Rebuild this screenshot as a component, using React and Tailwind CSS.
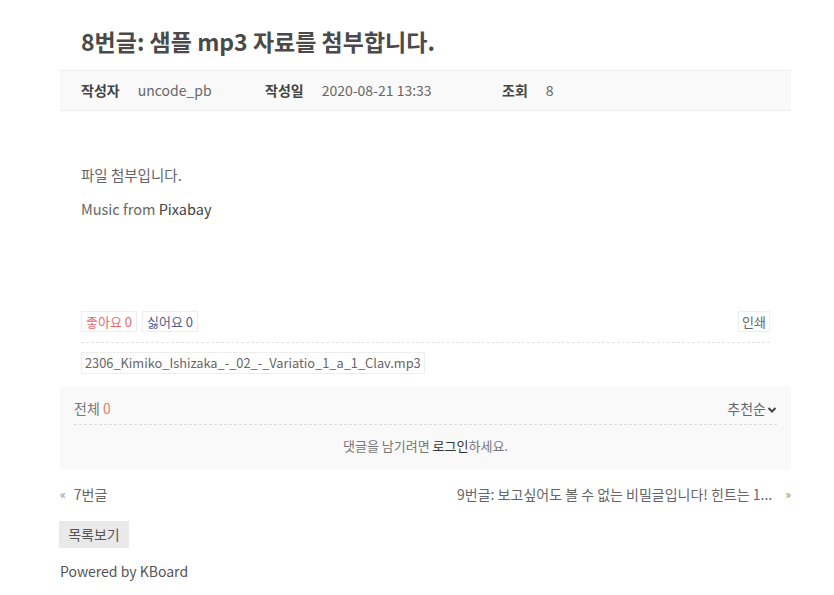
const FONT = {
  fontFamily: '"Noto Sans CJK KR", "Noto Sans", sans-serif',
};

const MetaItem = ({ label, value, className = "" }) => (
  <div className={`flex items-center ${className}`}>
    <span className="font-bold text-[#444]">{label}</span>
    <span className="ml-[18px] text-[#666]">{value}</span>
  </div>
);

export default function App() {
  return (
    <div style={FONT} className="min-h-[595px] bg-white text-[14px] text-[#545454]">
      <div className="ml-[60px] w-[731px] pt-[26px]">
        <h1 className="pl-[21px] text-[23px] font-bold leading-[30px] text-[#4a4a4a]">
          8번글: 샘플 mp3 자료를 첨부합니다.
        </h1>

        <div className="mt-[14px] flex h-[41px] items-center border-t border-b border-[#eeeeee] bg-[#f9f9f9] pl-[21px]">
          <MetaItem label="작성자" value="uncode_pb" className="w-[184px]" />
          <MetaItem label="작성일" value="2020-08-21 13:33" className="w-[237px]" />
          <MetaItem label="조회" value="8" />
        </div>

        <div className="px-[21px] pt-[53px] text-[14.5px] text-[#666]">
          <p className="leading-[22px]">파일 첨부입니다.</p>
          <p className="mt-[12px] leading-[22px]">
            Music from <span className="text-[#444]">Pixabay</span>
          </p>
        </div>

        <div className="mx-[21px] mt-[91px] flex items-center justify-between border-b border-dashed border-[#e3e3e3] pb-[10px]">
          <div className="flex gap-[5px]">
            <button className="h-[21px] border border-[#eeeeee] px-[4px] text-[13px] leading-[19px] text-[#f06a6a]">
              좋아요 0
            </button>
            <button className="h-[21px] border border-[#eeeeee] px-[4px] text-[13px] leading-[19px] text-[#555a8c]">
              싫어요 0
            </button>
          </div>
          <button className="h-[21px] border border-[#eeeeee] px-[3px] text-[13px] leading-[19px] text-[#666]">
            인쇄
          </button>
        </div>

        <div className="mx-[21px] mt-[9px]">
          <span className="inline-block h-[22px] border border-[#eeeeee] px-[3px] text-[12.8px] leading-[20px] text-[#666]">
            2306_Kimiko_Ishizaka_-_02_-_Variatio_1_a_1_Clav.mp3
          </span>
        </div>

        <div className="mt-[12px] bg-[#f9f9f9] px-[14px] pb-[14px] pt-[12px]">
          <div className="flex items-center justify-between border-b border-dashed border-[#dcdcdc] pb-[5px]">
            <div className="text-[#777]">
              전체 <span className="text-[#f2795b]">0</span>
            </div>
            <div className="flex items-center text-[#666]">
              추천순
              <svg width="10" height="8" viewBox="0 0 10 8" className="ml-[1px] mt-[2px]">
                <path d="M1.5 2 L5 5.5 L8.5 2" fill="none" stroke="#444" strokeWidth="2" />
              </svg>
            </div>
          </div>
          <p className="pt-[11px] text-center text-[13px] leading-[20px] text-[#777]">
            댓글을 남기려면 <span className="text-[#333]">로그인</span>하세요.
          </p>
        </div>

        <div className="mt-[14px] flex items-center justify-between leading-[20px] text-[#666]">
          <div className="flex items-center">
            <span className="text-[12px] text-[#888]">«</span>
            <span className="ml-[8px]">7번글</span>
          </div>
          <div className="flex items-center">
            <span>9번글: 보고싶어도 볼 수 없는 비밀글입니다! 힌트는 1...</span>
            <span className="ml-[13px] text-[12px] text-[#888]">»</span>
          </div>
        </div>

        <button className="-ml-px mt-[17px] h-[27px] w-[70px] bg-[#e9e9e9] text-[14px] text-[#555]">
          목록보기
        </button>

        <p className="mt-[12px] leading-[22px] text-[#555]">Powered by KBoard</p>
      </div>
    </div>
  );
}
